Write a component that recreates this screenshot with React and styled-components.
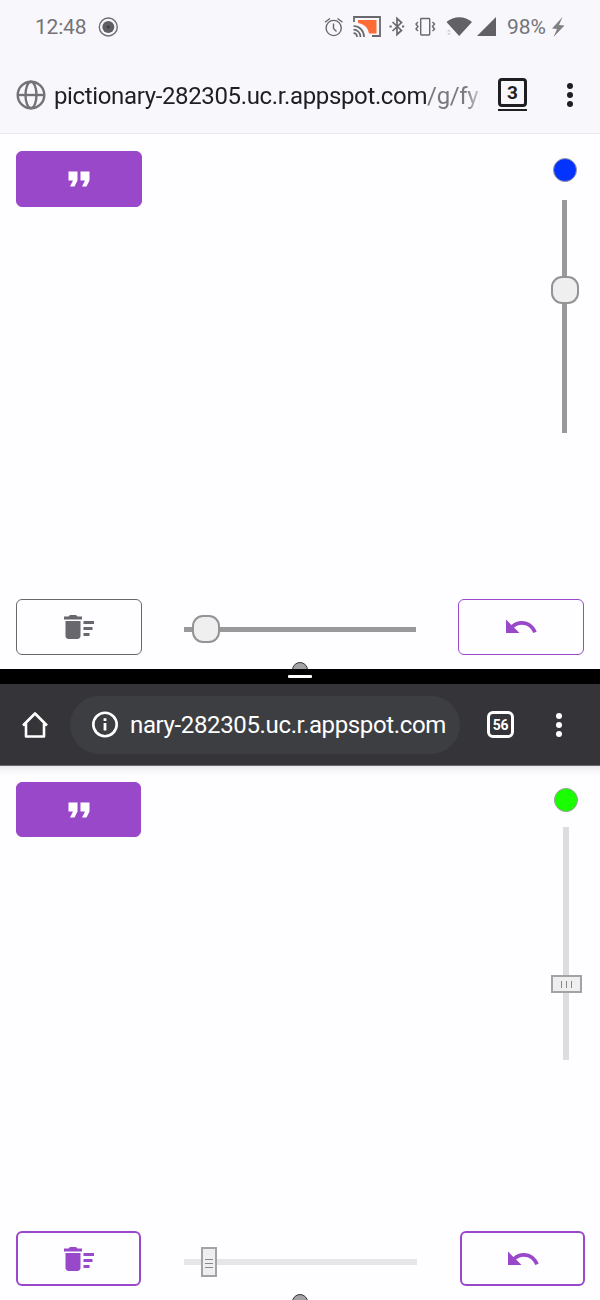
import React from "react";
import styled, { createGlobalStyle } from "styled-components";
import { MdFormatQuote, MdDeleteSweep, MdUndo } from "react-icons/md";

const GlobalStyle = createGlobalStyle`
  * { box-sizing: border-box; }
  body { margin: 0; background: #fefdff; font-family: Roboto, "Liberation Sans", sans-serif; }
  svg { display: block; flex: none; }
`;

const Page = styled.main`
  width: 600px;
  height: 1300px;
  display: flex;
  flex-direction: column;
  overflow: hidden;
`;

const LightChrome = styled.header`
  height: 134px;
  flex: none;
  background: #f8f7fc;
  border-bottom: 1px solid #e9e8ed;
`;

const StatusBar = styled.div`
  height: 54px;
  padding: 0 35px 0 35px;
  display: flex;
  align-items: center;
  justify-content: space-between;
  color: #747377;
  font-size: 21px;
`;

const StatusGroup = styled.div`
  display: flex;
  align-items: center;
  gap: ${(p) => p.$gap || 0}px;
`;

const StatusText = styled.span`
  width: ${(p) => p.$width}px;
  padding-left: ${(p) => p.$inset || 0}px;
  letter-spacing: ${(p) => p.$spacing || 0}px;
  white-space: nowrap;
  line-height: 26px;
`;

const AddressRow = styled.div`
  height: 79px;
  padding: 2px 27px 0 16px;
  display: flex;
  align-items: center;
`;

const Url = styled.div`
  width: ${(p) => p.$width}px;
  flex: none;
  overflow: hidden;
  white-space: nowrap;
  font-size: 24px;
  line-height: 32px;
  letter-spacing: -0.36px;
  color: ${(p) => p.$color};
`;

const FadedUrl = styled(Url)`
  margin: 2px 18px 0 8px;
  mask-image: linear-gradient(to right, #000 412px, transparent 432px);
`;

const Path = styled.span`
  color: #7a797e;
`;

const TabStack = styled.div`
  width: 29px;
  height: 33px;
  margin: 0 auto 0 0;
  border-bottom: 2px solid #1f1f22;
`;

const TabCount = styled.div`
  width: ${(p) => p.$size}px;
  height: ${(p) => p.$size}px;
  display: flex;
  align-items: center;
  justify-content: center;
  border: 3px solid currentColor;
  border-radius: ${(p) => p.$radius}px;
  color: ${(p) => p.$color};
  font-size: ${(p) => p.$font}px;
  font-weight: 700;
  letter-spacing: ${(p) => p.$spacing || 0}px;
  line-height: 1;
`;

const Dots = styled.div`
  display: flex;
  flex-direction: column;
  gap: 3px;
  color: ${(p) => p.$color};
`;

const Dot = styled.i`
  width: 6px;
  height: 6px;
  border-radius: 50%;
  background: currentColor;
`;

const Spacer = styled.div`
  flex: 1;
`;

const Divider = styled.div`
  height: 15px;
  flex: none;
  display: flex;
  justify-content: center;
  padding-top: 6px;
  background: #000;
`;

const DragHandle = styled.i`
  width: 24px;
  height: 3px;
  border-radius: 1px;
  background: #fff;
`;

const DarkChrome = styled.header`
  height: 82px;
  flex: none;
  padding: 0 38px 0 21px;
  display: flex;
  align-items: center;
  background: #353438;
  color: #fff;
  border-bottom: 1px solid #69686c;
`;

const Pill = styled.div`
  width: 390px;
  height: 58px;
  margin: 0 27px 0 21px;
  padding: 1px 0 0 21px;
  display: flex;
  align-items: center;
  gap: 11px;
  border-radius: 29px;
  background: #3d3e42;
`;

const Board = styled.section`
  height: ${(p) => p.$height}px;
  flex: none;
  position: relative;
  overflow: hidden;
  display: flex;
  flex-direction: column;
  justify-content: space-between;
  padding: ${(p) => p.$padding};
  background: ${(p) => (p.$shaded ? "linear-gradient(#e9e9ef, #f8f8fb 5px, #fefdff 10px)" : "#fefdff")};
`;

const BoardRow = styled.div`
  display: flex;
  justify-content: space-between;
  align-items: ${(p) => p.$align};
`;

const ToolButton = styled.button`
  width: ${(p) => p.$width || 126}px;
  height: ${(p) => p.$height || 56}px;
  padding: 0;
  display: flex;
  align-items: center;
  justify-content: center;
  border: ${(p) => p.$line || 1.5}px solid ${(p) => p.$tone};
  border-radius: 6px;
  background: ${(p) => (p.$filled ? p.$tone : "#fefdff")};
  color: ${(p) => (p.$filled ? "#fff" : p.$tone)};
`;

const ColorPicker = styled.div`
  width: 31px;
  margin: ${(p) => p.$top}px 4px 0 0;
  display: flex;
  flex-direction: column;
  align-items: center;
  gap: ${(p) => p.$gap}px;
`;

const Swatch = styled.i`
  width: 24px;
  height: 24px;
  border: 1px solid #9b9b9e;
  border-radius: 50%;
  background: ${(p) => p.$color};
`;

const Track = styled.div`
  position: relative;
  flex: none;
  margin-top: ${(p) => p.$drop || 0}px;
  width: ${(p) => (p.$vertical ? p.$thick : p.$length)}px;
  height: ${(p) => (p.$vertical ? p.$length : p.$thick)}px;
  background: ${(p) => p.$color};
`;

const Thumb = styled.i`
  position: absolute;
  left: ${(p) => p.$x}px;
  top: ${(p) => p.$y}px;
  width: ${(p) => p.$w}px;
  height: ${(p) => p.$h}px;
  display: flex;
  flex-direction: ${(p) => (p.$stacked ? "column" : "row")};
  align-items: center;
  justify-content: center;
  gap: ${(p) => (p.$stacked ? 3 : 4)}px;
  padding-top: ${(p) => (p.$stacked ? 2 : 0)}px;
  border: 2px solid ${(p) => (p.$round ? "#949396" : "#a3a2a5")};
  border-radius: ${(p) => (p.$round ? 11 : 0)}px;
  background: #efeff0;
`;

const Ridge = styled.i`
  width: ${(p) => (p.$wide ? 8 : 1)}px;
  height: ${(p) => (p.$wide ? 1 : 7)}px;
  background: #88878a;
`;

const BrushPreview = styled.i`
  position: absolute;
  left: 292px;
  bottom: ${(p) => p.$bottom}px;
  width: 16px;
  height: 16px;
  border: 1.5px solid #353438;
  border-radius: 50%;
  background: #a3a2a5;
`;

function OverflowDots({ color }) {
  return <Dots $color={color}><Dot /><Dot /><Dot /></Dots>;
}

function RecordIcon() {
  return (
    <svg width="20" height="20" viewBox="0 0 20 20" fill="none">
      <circle cx="10.300" cy="10" r="9" stroke="#6e6d71" strokeWidth="1.400" />
      <circle cx="10.300" cy="10" r="6" fill="#5f5e62" />
      <circle cx="10.300" cy="10" r="1.200" fill="#343337" />
    </svg>
  );
}

function StatusIcons() {
  return (
    <svg width="175" height="26" viewBox="323 14 175 26" fill="none" stroke="#69686c" strokeWidth="1.400">
      <circle cx="333.700" cy="28" r="7.600" />
      <path d="M333.500 23.500v5l3 3M325 22.300l5-3.800M342.500 22.300l-5-3.800" />
      <path d="M358 20h18.500v13.500H369C368 27 363.500 24 358 23z" fill="#ff6b35" stroke="none" />
      <path d="M354 22v-5h26v19h-8" strokeWidth="1.800" />
      <path d="M353.500 26c6 0 10.500 4.500 10.500 11M353.500 29.600c4 0 7 3.200 7 7.400M353.500 33.200c2 0 3.500 1.500 3.500 3.800" strokeWidth="1.700" />
      <path d="M392.500 22l9 8.500-4.500 4V18.500l4.500 4-9 8.500" strokeWidth="1.700" />
      <path d="M389.500 26.500h2.200M402 26.500h2.200" strokeWidth="2" />
      <rect x="420.700" y="18.500" width="9" height="16.500" rx="0.700" />
      <path d="M418 22l-2 2 2 2.500-2 2.500 2 2M432.500 22l2 2-2 2.500 2 2.500-2 2" />
      <path d="M446.500 22c7-6.500 18.500-6.500 25.500 0l-12.800 14z" fill="#626165" stroke="none" />
      <path d="M447 31.500h4l-2-2zM447 33h4l-2 2z" fill="#cccbd0" stroke="none" />
      <path d="M477 36h19V17z" fill="#626165" stroke="none" />
    </svg>
  );
}

function BoltIcon() {
  return (
    <svg width="14" height="22" viewBox="0 0 14 22" fill="#818084">
      <path d="M11.500 1L1 12.500l5 .5-3.500 8L13.500 9.500 8 9z" />
    </svg>
  );
}

function GlobeIcon() {
  return (
    <svg width="30" height="30" viewBox="0 0 30 30" fill="none" stroke="#737276" strokeWidth="2.400">
      <circle cx="15" cy="15" r="13.300" />
      <ellipse cx="15" cy="15" rx="5.500" ry="13.300" />
      <path d="M2 15h26" />
    </svg>
  );
}

function HomeIcon() {
  return (
    <svg width="28" height="28" viewBox="0 0 28 28" fill="none" stroke="#fff" strokeWidth="2.600">
      <path d="M2 14.500L14 2.500l12 12M5 12.500V25.500h18V12.500" strokeLinejoin="round" />
    </svg>
  );
}

function InfoIcon() {
  return (
    <svg width="28" height="28" viewBox="0 0 28 28" fill="none" stroke="#fff" strokeWidth="2.600">
      <circle cx="14" cy="13.500" r="11.700" />
      <path d="M14 12v7.500M14 7.200v2.800" strokeWidth="2.800" />
    </svg>
  );
}

const PURPLE = "#9a48ca";

export default function App() {
  return (
    <Page>
      <GlobalStyle />
      <LightChrome>
        <StatusBar>
          <StatusGroup $gap={11}>
            <StatusText $width={52} $spacing={-0.2}>12:48</StatusText>
            <RecordIcon />
          </StatusGroup>
          <StatusGroup>
            <StatusIcons />
            <StatusGroup $gap={5}>
              <StatusText $width={48} $inset={9}>98%</StatusText>
              <BoltIcon />
            </StatusGroup>
          </StatusGroup>
        </StatusBar>
        <AddressRow>
          <GlobeIcon />
          <FadedUrl $width={426} $color="#1f1f22">
            pictionary-282305.uc.r.appspot.com<Path>/g/fyp</Path>
          </FadedUrl>
          <TabStack>
            <TabCount $size={29} $radius={4} $font={19} $color="#1f1f22">3</TabCount>
          </TabStack>
          <OverflowDots color="#1f1f22" />
        </AddressRow>
      </LightChrome>

      <Board $height={535} $padding="17px 16px 14px">
        <BoardRow $align="flex-start">
          <ToolButton $filled $tone={PURPLE} aria-label="Word"><MdFormatQuote size={36} /></ToolButton>
          <ColorPicker $top={7} $gap={18}>
            <Swatch $color="#0432ff" />
            <Track $vertical $thick={5} $length={233} $color="#99989a">
              <Thumb $round $x={-11.5} $y={76} $w={28} $h={28} />
            </Track>
          </ColorPicker>
        </BoardRow>
        <BoardRow $align="center">
          <ToolButton $tone="#68676d" aria-label="Clear"><MdDeleteSweep size={36} /></ToolButton>
          <Track $thick={5} $length={232} $drop={4} $color="#99989a">
            <Thumb $round $x={8} $y={-11.5} $w={28} $h={28} />
          </Track>
          <ToolButton $tone={PURPLE} aria-label="Undo"><MdUndo size={36} /></ToolButton>
        </BoardRow>
        <BrushPreview $bottom={-9} />
      </Board>

      <Divider><DragHandle /></Divider>
      <DarkChrome>
        <HomeIcon />
        <Pill>
          <InfoIcon />
          <Url $width={322} $color="#fff">nary-282305.uc.r.appspot.com</Url>
        </Pill>
        <TabCount $size={27} $radius={6} $font={14} $spacing={-0.4} $color="#fff">56</TabCount>
        <Spacer />
        <OverflowDots color="#fff" />
      </DarkChrome>

      <Board $shaded $height={534} $padding="16px 15px 14px 16px">
        <BoardRow $align="flex-start">
          <ToolButton $filled $width={125} $height={55} $tone={PURPLE} aria-label="Word"><MdFormatQuote size={36} /></ToolButton>
          <ColorPicker $top={6} $gap={15}>
            <Swatch $color="#1aff00" />
            <Track $vertical $thick={6} $length={233} $color="#dddcde">
              <Thumb $x={-12} $y={148} $w={31} $h={18}><Ridge /><Ridge /><Ridge /></Thumb>
            </Track>
          </ColorPicker>
        </BoardRow>
        <BoardRow $align="center">
          <ToolButton $width={125} $height={55} $line={2} $tone={PURPLE} aria-label="Clear"><MdDeleteSweep size={36} /></ToolButton>
          <Track $thick={6} $length={233} $drop={7} $color="#e6e5e7">
            <Thumb $stacked $x={17} $y={-12} $w={16} $h={30}><Ridge $wide /><Ridge $wide /><Ridge $wide /></Thumb>
          </Track>
          <ToolButton $width={125} $height={55} $line={2} $tone={PURPLE} aria-label="Undo"><MdUndo size={36} /></ToolButton>
        </BoardRow>
        <BrushPreview $bottom={-10} />
      </Board>
    </Page>
  );
}
